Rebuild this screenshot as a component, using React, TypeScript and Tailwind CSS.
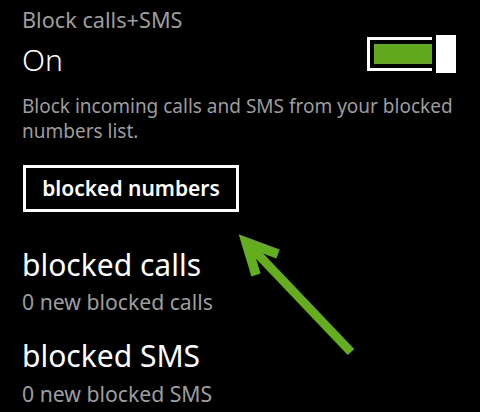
export default function App() {
  return (
    <div
      className="relative h-[412px] w-[480px] overflow-hidden bg-black"
      style={{ fontFamily: '"Noto Sans", "Open Sans", sans-serif' }}
    >
      <div className="flex flex-col pl-[22px] pr-[24px]">
        <div className="flex items-start justify-between">
          <div className="flex flex-col">
            <span className="pt-[6px] text-[21.7px] leading-[28px] text-[#9d9d9d]">Block calls+SMS</span>
            <span className="mt-[8px] text-[30px] leading-[36px] font-light text-white">On</span>
          </div>
          <div className="mt-[35px] flex items-center gap-[4px]">
            <div className="h-[34px] w-[65px] border-[3px] border-r-0 border-white py-[4px] pl-[4px]">
              <div className="h-full w-full bg-[#63a91f]"></div>
            </div>
            <div className="h-[38px] w-[20px] bg-white"></div>
          </div>
        </div>

        <p className="mt-[16px] w-[440px] text-[19px] leading-[25px] text-[#9d9d9d]">
          Block incoming calls and SMS from your blocked numbers list.
        </p>

        <button
          type="button"
          className="mt-[21px] ml-[1px] h-[47px] w-[216px] border-[3px] border-white text-[21px] font-semibold text-white"
        >
          blocked numbers
        </button>

        <div className="mt-[35px] flex flex-col">
          <span className="text-[30px] leading-[36px] text-white">blocked calls</span>
          <span className="mt-[5px] text-[21.2px] leading-[28px] text-[#9d9d9d]">0 new blocked calls</span>
        </div>

        <div className="mt-[22px] flex flex-col">
          <span className="text-[30px] leading-[36px] text-white">blocked SMS</span>
          <span className="mt-[6px] text-[21.2px] leading-[28px] text-[#9d9d9d]">0 new blocked SMS</span>
        </div>
      </div>

      <svg className="absolute left-0 top-0" width="480" height="412" viewBox="0 0 480 412">
        <line x1="351" y1="352" x2="250" y2="246" stroke="#64ad1e" strokeWidth="9" />
        <polyline
          points="278,254 246,242 256,275"
          fill="none"
          stroke="#64ad1e"
          strokeWidth="9.5"
          strokeLinejoin="miter"
        />
      </svg>
    </div>
  )
}
